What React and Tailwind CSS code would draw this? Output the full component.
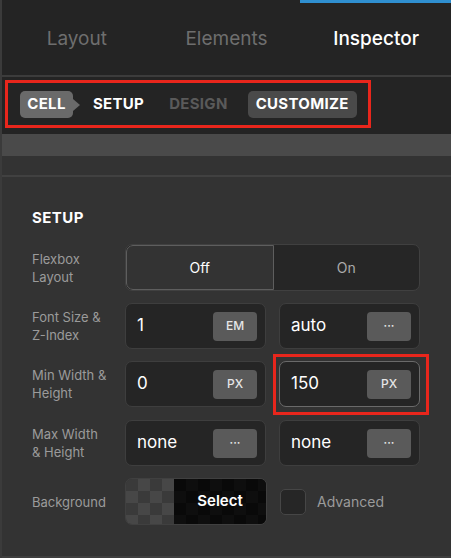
import React, { useState } from "react";

const crumbs = [
  { id: "cell", label: "CELL" },
  { id: "setup", label: "SETUP" },
  { id: "design", label: "DESIGN" },
  { id: "customize", label: "CUSTOMIZE" },
];

function UnitInput({ value, unit, active, marked }) {
  return (
    <div
      className={`relative flex h-full flex-1 items-center justify-between rounded-[7px] border bg-[#252525] pl-[11px] pr-[8px] ${
        active ? "border-[#6a6a6a]" : "border-[#3e3e3e]"
      }`}
    >
      <span className="text-[17px] text-white">{value}</span>
      <span className="flex h-[29px] w-[44px] items-center justify-center rounded-[4px] bg-[#5a5a5a] text-[12px] font-medium text-[#e6e6e6]">
        {unit}
      </span>
      {/* annotation frame around the edited field */}
      {marked && (
        <div className="pointer-events-none absolute -bottom-[9px] -left-[7px] -right-[10px] -top-[8px] border-[3px] border-[#e8261c]" />
      )}
    </div>
  );
}

function Row({ label, children }) {
  return (
    <div className="flex h-full items-center">
      <div className="w-[93px] text-[13px] leading-[18px] text-[#9b9b9b]">
        {label}
      </div>
      <div className="flex h-full flex-1 gap-[13px]">{children}</div>
    </div>
  );
}

export default function App() {
  const [tab] = useState("Inspector");
  const [flex, setFlex] = useState(false);

  return (
    <div className="flex h-[558px] w-[451px] flex-col border-l-2 border-[#3b3b3b] bg-[#242424] font-['Inter','Liberation_Sans',sans-serif]">
      {/* top tabs */}
      <div className="relative grid h-[75px] grid-cols-3 items-center pt-[3px]">
        <div className="absolute right-0 top-0 h-[3px] w-[151px] bg-[#2f8fd0]" />
        {["Layout", "Elements", "Inspector"].map((t) => (
          <div
            key={t}
            className={`text-center text-[19px] ${
              t === tab ? "font-medium text-white" : "text-[#6e6e6e]"
            }`}
          >
            {t}
          </div>
        ))}
      </div>
      <div className="h-[2px] bg-[#3c3c3c]" />

      {/* breadcrumb */}
      <div className="h-[57px] pl-[3px] pt-[3px]">
        <div className="flex h-[48px] w-[366px] items-center border-[3px] border-[#e8261c] pl-[12px] pt-[1px] text-[15px] font-bold tracking-[0.02em]">
          <div className="relative flex h-[27px] w-[53px] items-center justify-center rounded-[5px] bg-[#6a6a6a] text-white">
            {crumbs[0].label}
            <span className="absolute -right-[7px] top-1/2 h-0 w-0 -translate-y-1/2 border-y-[6px] border-l-[7px] border-y-transparent border-l-[#6a6a6a]" />
          </div>
          <span className="ml-[20px] text-white">{crumbs[1].label}</span>
          <span className="ml-[25px] text-[#5a5a5a]">{crumbs[2].label}</span>
          <div className="ml-[20px] flex h-[27px] w-[109px] items-center justify-center rounded-[5px] bg-[#4a4a4a] text-white">
            {crumbs[3].label}
          </div>
        </div>
      </div>

      <div className="h-[22px] bg-[#4a4a4a]" />
      <div className="h-[19px] bg-[#333333]" />
      <div className="h-[2px] bg-[#414141]" />

      {/* setup panel */}
      <div className="flex-1 border-b-2 border-[#3f3f3f] bg-[#333333] pl-[30px] pr-[31px] pt-[31px]">
        <div className="text-[15px] font-bold leading-[20px] tracking-[0.03em] text-white">
          SETUP
        </div>

        <div className="mt-[16px] flex flex-col gap-[12px]">
          <div className="h-[47px]">
            <Row
              label={
                <>
                  Flexbox
                  <br />
                  Layout
                </>
              }
            >
              <div className="flex h-[47px] flex-1 overflow-hidden rounded-[7px] border border-[#404040] bg-[#262626] text-[14px]">
                <button
                  onClick={() => setFlex(false)}
                  className={`flex-1 rounded-l-[7px] ${
                    !flex
                      ? "border border-[#5e5e5e] bg-[#333333] text-white"
                      : "text-[#aaaaaa]"
                  }`}
                >
                  Off
                </button>
                <button
                  onClick={() => setFlex(true)}
                  className={`flex-1 ${
                    flex
                      ? "border border-[#5e5e5e] bg-[#333333] text-white"
                      : "text-[#aaaaaa]"
                  }`}
                >
                  On
                </button>
              </div>
            </Row>
          </div>

          <div className="h-[46px]">
            <Row
              label={
                <>
                  Font Size &amp;
                  <br />
                  Z-Index
                </>
              }
            >
              <UnitInput value="1" unit="EM" />
              <UnitInput value="auto" unit="···" />
            </Row>
          </div>

          <div className="h-[46px]">
            <Row
              label={
                <>
                  Min Width &amp;
                  <br />
                  Height
                </>
              }
            >
              <UnitInput value="0" unit="PX" />
              <UnitInput value="150" unit="PX" active marked />
            </Row>
          </div>

          <div className="mt-[1px] h-[46px]">
            <Row
              label={
                <>
                  Max Width
                  <br />
                  &amp; Height
                </>
              }
            >
              <UnitInput value="none" unit="···" />
              <UnitInput value="none" unit="···" />
            </Row>
          </div>

          <div className="h-[47px]">
            <Row label="Background">
              <div className="flex h-full flex-1 overflow-hidden rounded-[7px] border border-[#404040]">
                <div className="w-[48px] bg-[image:conic-gradient(#474747_25%,#3a3a3a_0_50%,#474747_0_75%,#3a3a3a_0)] bg-[length:24px_24px]" />
                <div className="flex flex-1 items-center justify-center bg-[#0b0b0b] bg-[image:conic-gradient(#0e0e0e_25%,#090909_0_50%,#0e0e0e_0_75%,#090909_0)] bg-[length:24px_24px] text-[15px] font-semibold text-white">
                  Select
                </div>
              </div>
              <div className="flex flex-1 items-center">
                <div className="h-[26px] w-[26px] rounded-[5px] border border-[#464646] bg-[#262626]" />
                <span className="ml-[11px] text-[14px] text-[#9b9b9b]">
                  Advanced
                </span>
              </div>
            </Row>
          </div>
        </div>
      </div>
    </div>
  );
}
